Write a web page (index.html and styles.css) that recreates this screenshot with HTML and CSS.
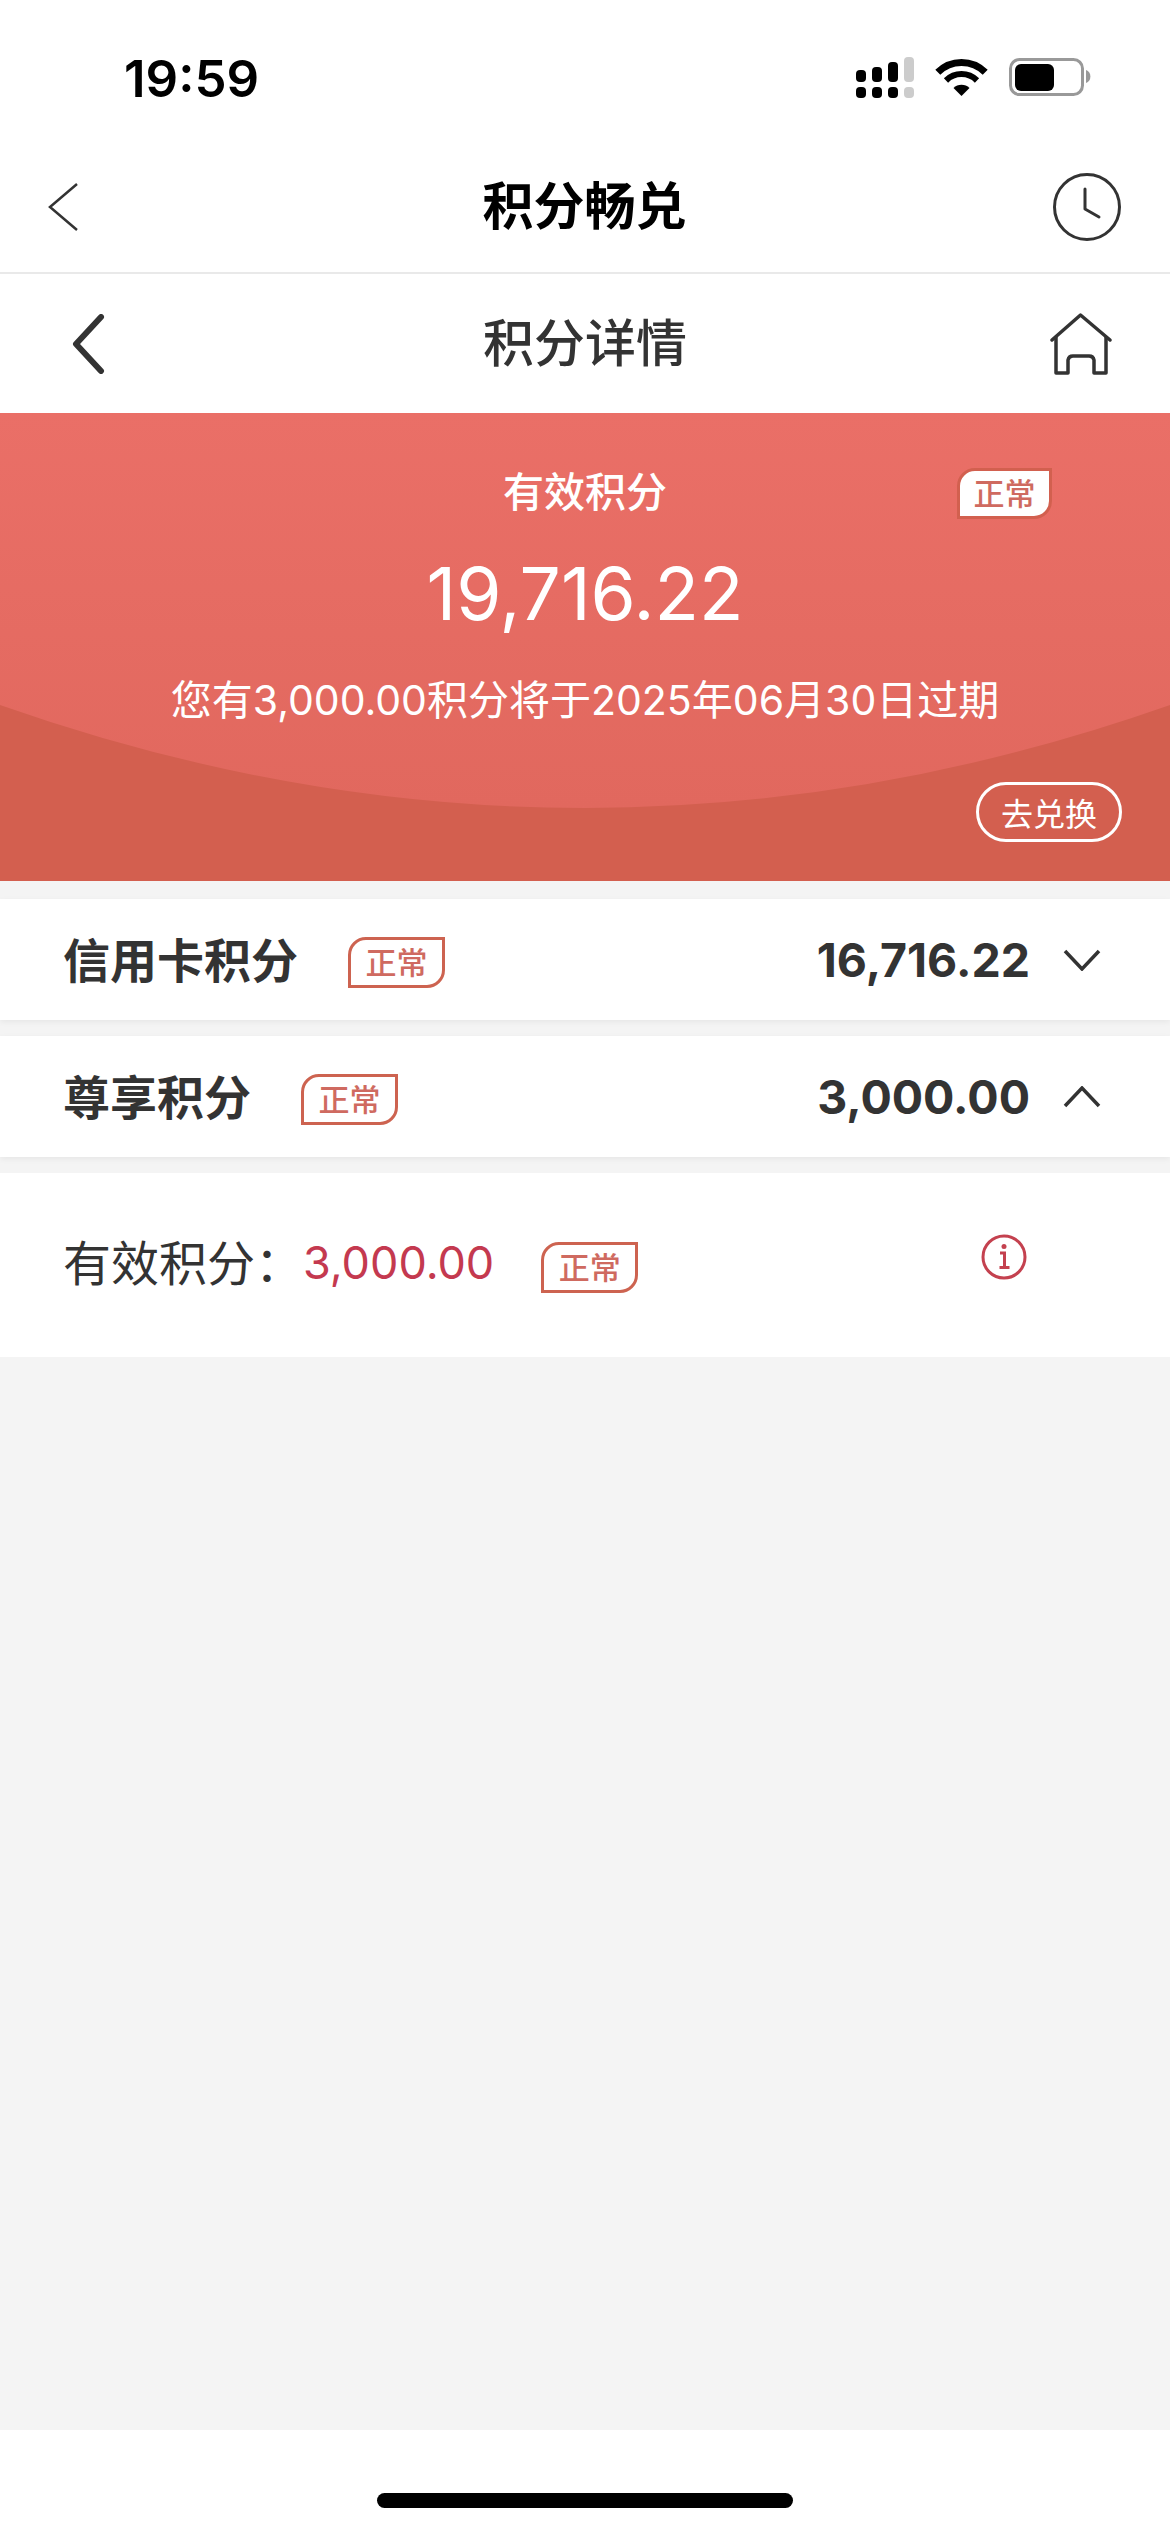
FILE: index.html
```html
<!DOCTYPE html>
<html lang="zh-CN">
<head>
    <meta charset="UTF-8">
    <meta name="viewport" content="width=device-width, initial-scale=1.0">
    <title>积分详情</title>
    <link rel="stylesheet" href="styles.css">
</head>
<body>
    <div class="status-bar">
        <span class="time">19:59</span>
        <svg class="status-icons" width="235" height="41" viewBox="0 0 235 41">
            <rect x="0" y="13" width="10" height="12" rx="4"/>
            <rect x="16" y="10" width="10" height="15" rx="4"/>
            <rect x="32" y="5" width="10" height="20" rx="4"/>
            <rect x="48" y="0" width="10" height="25" rx="4" fill="#ccc"/>
            <rect x="0" y="30" width="10" height="11" rx="4"/>
            <rect x="16" y="30" width="10" height="11" rx="4"/>
            <rect x="32" y="30" width="10" height="11" rx="4"/>
            <rect x="48" y="30" width="10" height="11" rx="4" fill="#ccc"/>
            <path d="M81.8 15.3a33.5 33.5 0 0 1 47.4 0" fill="none" stroke="#000" stroke-width="7"/>
            <path d="M90 23.5a22 22 0 0 1 31 0" fill="none" stroke="#000" stroke-width="6"/>
            <path d="M105.5 39L97.5 31a11.3 11.3 0 0 1 16 0Z"/>
            <rect x="154.5" y="2.5" width="72" height="35" rx="9" fill="none" stroke="#999" stroke-width="3"/>
            <rect x="159" y="7" width="39" height="27" rx="6"/>
            <path d="M230 13a7 7 0 0 1 0 13Z" fill="#999"/>
        </svg>
    </div>

    <div class="nav nav-top">
        <svg class="nav-left" width="30" height="48" viewBox="0 0 30 48">
            <path d="M29 1L2 24l27 23" fill="none" stroke="#333" stroke-width="2.5"/>
        </svg>
        <h1 class="nav-title nav-title-bold">积分畅兑</h1>
        <svg class="nav-right" width="68" height="68" viewBox="0 0 68 68">
            <circle cx="34" cy="34" r="32.5" fill="none" stroke="#333" stroke-width="3"/>
            <path d="M32 16v20l14 8" fill="none" stroke="#333" stroke-width="3" stroke-linecap="round" stroke-linejoin="round"/>
        </svg>
    </div>

    <div class="nav nav-sub">
        <svg class="nav-left" width="34" height="60" viewBox="0 0 34 60">
            <path d="M30 3L5 30l25 27" fill="none" stroke="#333" stroke-width="6" stroke-linecap="round" stroke-linejoin="round"/>
        </svg>
        <h2 class="nav-title">积分详情</h2>
        <svg class="nav-right" width="62" height="62" viewBox="0 0 62 62">
            <path d="M2 27L30.500 2 60 27" fill="none" stroke="#333" stroke-width="3.500" stroke-linecap="round" stroke-linejoin="round"/>
            <path d="M6 24v36h12V47a5 5 0 0 1 5-4h16a5 5 0 0 1 5 4v13h12V24" fill="none" stroke="#333" stroke-width="3.500" stroke-linejoin="round"/>
        </svg>
    </div>

    <div class="hero">
        <svg class="hero-curve" width="1170" height="468" viewBox="0 0 1170 468">
            <defs>
                <linearGradient id="heroFill" x1="0" y1="0" x2="0" y2="1">
                    <stop offset="0" stop-color="#ea6f67"/>
                    <stop offset="1" stop-color="#e1685e"/>
                </linearGradient>
            </defs>
            <path d="M0 0H1170V292Q585 498 0 292Z" fill="url(#heroFill)"/>
        </svg>
        <div class="hero-label">有效积分</div>
        <div class="hero-number">19,716.22</div>
        <div class="hero-note">您有3,000.00积分将于2025年06月30日过期</div>
        <span class="tag hero-tag">正常</span>
        <span class="hero-btn">去兑换</span>
    </div>

    <div class="main">
        <div class="row">
            <span class="row-label">信用卡积分</span>
            <span class="tag">正常</span>
            <span class="row-value">16,716.22</span>
            <svg class="row-arrow" width="38" height="22" viewBox="0 0 38 22">
                <path d="M2 2l17 18L36 2" fill="none" stroke="#333" stroke-width="3.500"/>
            </svg>
        </div>
        <div class="row">
            <span class="row-label">尊享积分</span>
            <span class="tag">正常</span>
            <span class="row-value">3,000.00</span>
            <svg class="row-arrow" width="38" height="22" viewBox="0 0 38 22">
                <path d="M2 20L19 2l17 18" fill="none" stroke="#333" stroke-width="3.500"/>
            </svg>
        </div>
        <div class="detail">
            <span class="detail-label">有效积分：</span>
            <span class="detail-value">3,000.00</span>
            <span class="tag">正常</span>
            <svg class="detail-info" width="46" height="46" viewBox="0 0 46 46">
                <circle cx="23" cy="23" r="21" fill="none" stroke="#c4414f" stroke-width="3"/>
                <circle cx="23" cy="12.500" r="2.500" fill="#c4414f"/>
                <path d="M19 19h4.500v14M18.500 33.500h10" fill="none" stroke="#c4414f" stroke-width="3"/>
            </svg>
        </div>
    </div>

    <div class="home-area">
        <div class="home-bar"></div>
    </div>
</body>
</html>
```

FILE: styles.css
```css
* {
    box-sizing: border-box;
}
body {
    margin: 0;
    width: 1170px;
    height: 2532px;
    display: flex;
    flex-direction: column;
    background-color: #f4f4f4;
    color: #333;
    font-family: Inter, "Noto Sans CJK SC", sans-serif;
}
.status-bar {
    height: 141px;
    padding: 57px 79px 0 124px;
    display: flex;
    justify-content: space-between;
    align-items: flex-start;
    background-color: white;
}
.time {
    font-size: 51px;
    font-weight: 600;
    line-height: 44px;
    color: #000;
}
.nav {
    display: grid;
    grid-template-columns: 1fr auto 1fr;
    align-items: center;
    background-color: white;
}
.nav-top {
    height: 133px;
    padding: 0 49px 0 48px;
    border-bottom: 2px solid #e9e9e9;
}
.nav-sub {
    height: 139px;
    padding: 0 58px;
}
.nav-sub .nav-left {
    margin-left: 13px;
}
.nav-title {
    margin: 0;
    font-size: 51px;
    font-weight: 500;
    line-height: 60px;
    color: #333;
}
.nav-left {
    justify-self: start;
}
.nav-right {
    justify-self: end;
}
.nav-title-bold {
    font-weight: 700;
    color: #000;
}
.hero {
    position: relative;
    height: 468px;
    padding-top: 51px;
    background-color: #d35f4f;
    color: white;
    text-align: center;
}
.hero-curve {
    position: absolute;
    left: 0;
    top: 0;
}
.hero-label,
.hero-number,
.hero-note {
    position: relative;
}
.hero-label {
    font-size: 41px;
    font-weight: 500;
    line-height: 56px;
}
.hero-number {
    margin-top: 29px;
    font-size: 73px;
    font-weight: 400;
    line-height: 90px;
}
.hero-note {
    margin-top: 33px;
    font-size: 41px;
    font-weight: 400;
    line-height: 56px;
}
.tag {
    display: flex;
    align-items: center;
    justify-content: center;
    width: 97px;
    height: 51px;
    border: 3px solid #cd6350;
    border-radius: 18px 0 18px 0;
    background-color: white;
    color: #cf6a60;
    font-size: 31px;
    font-weight: 500;
    line-height: 1;
}
.row .tag,
.detail .tag {
    margin-top: 5px;
}
.hero-tag {
    position: absolute;
    right: 118px;
    top: 55px;
    width: 95px;
    border-color: #d2604f;
}
.hero-btn {
    position: absolute;
    right: 48px;
    bottom: 39px;
    width: 146px;
    height: 60px;
    display: flex;
    align-items: center;
    justify-content: center;
    border: 3px solid white;
    border-radius: 30px;
    font-size: 32px;
}
.main {
    flex: 1;
    padding-top: 18px;
}
.row {
    height: 121px;
    margin-bottom: 16px;
    padding-right: 69px;
    padding-left: 63px;
    display: flex;
    align-items: center;
    background-color: white;
    box-shadow: 0 2px 6px rgba(0, 0, 0, 0.06);
}
.row-label {
    margin-right: 50px;
    margin-bottom: 4px;
    font-size: 47px;
    font-weight: 600;
}
.row-value {
    margin-left: auto;
    font-size: 46.5px;
    font-weight: 700;
}
.row-arrow {
    margin-left: 33px;
}
.detail {
    height: 184px;
    padding-right: 143px;
    padding-left: 63px;
    display: flex;
    align-items: center;
    background-color: white;
}
.detail-label {
    margin-bottom: 10px;
    font-size: 48px;
    font-weight: 400;
}
.detail-value {
    margin-right: 47px;
    margin-bottom: 6px;
    font-size: 45px;
    color: #c4394f;
}
.detail-info {
    margin-left: auto;
    margin-top: -16px;
}
.home-area {
    height: 102px;
    padding-top: 63px;
    background-color: white;
}
.home-bar {
    width: 416px;
    height: 15px;
    margin: 0 auto;
    border-radius: 8px;
    background-color: #000;
}
```
